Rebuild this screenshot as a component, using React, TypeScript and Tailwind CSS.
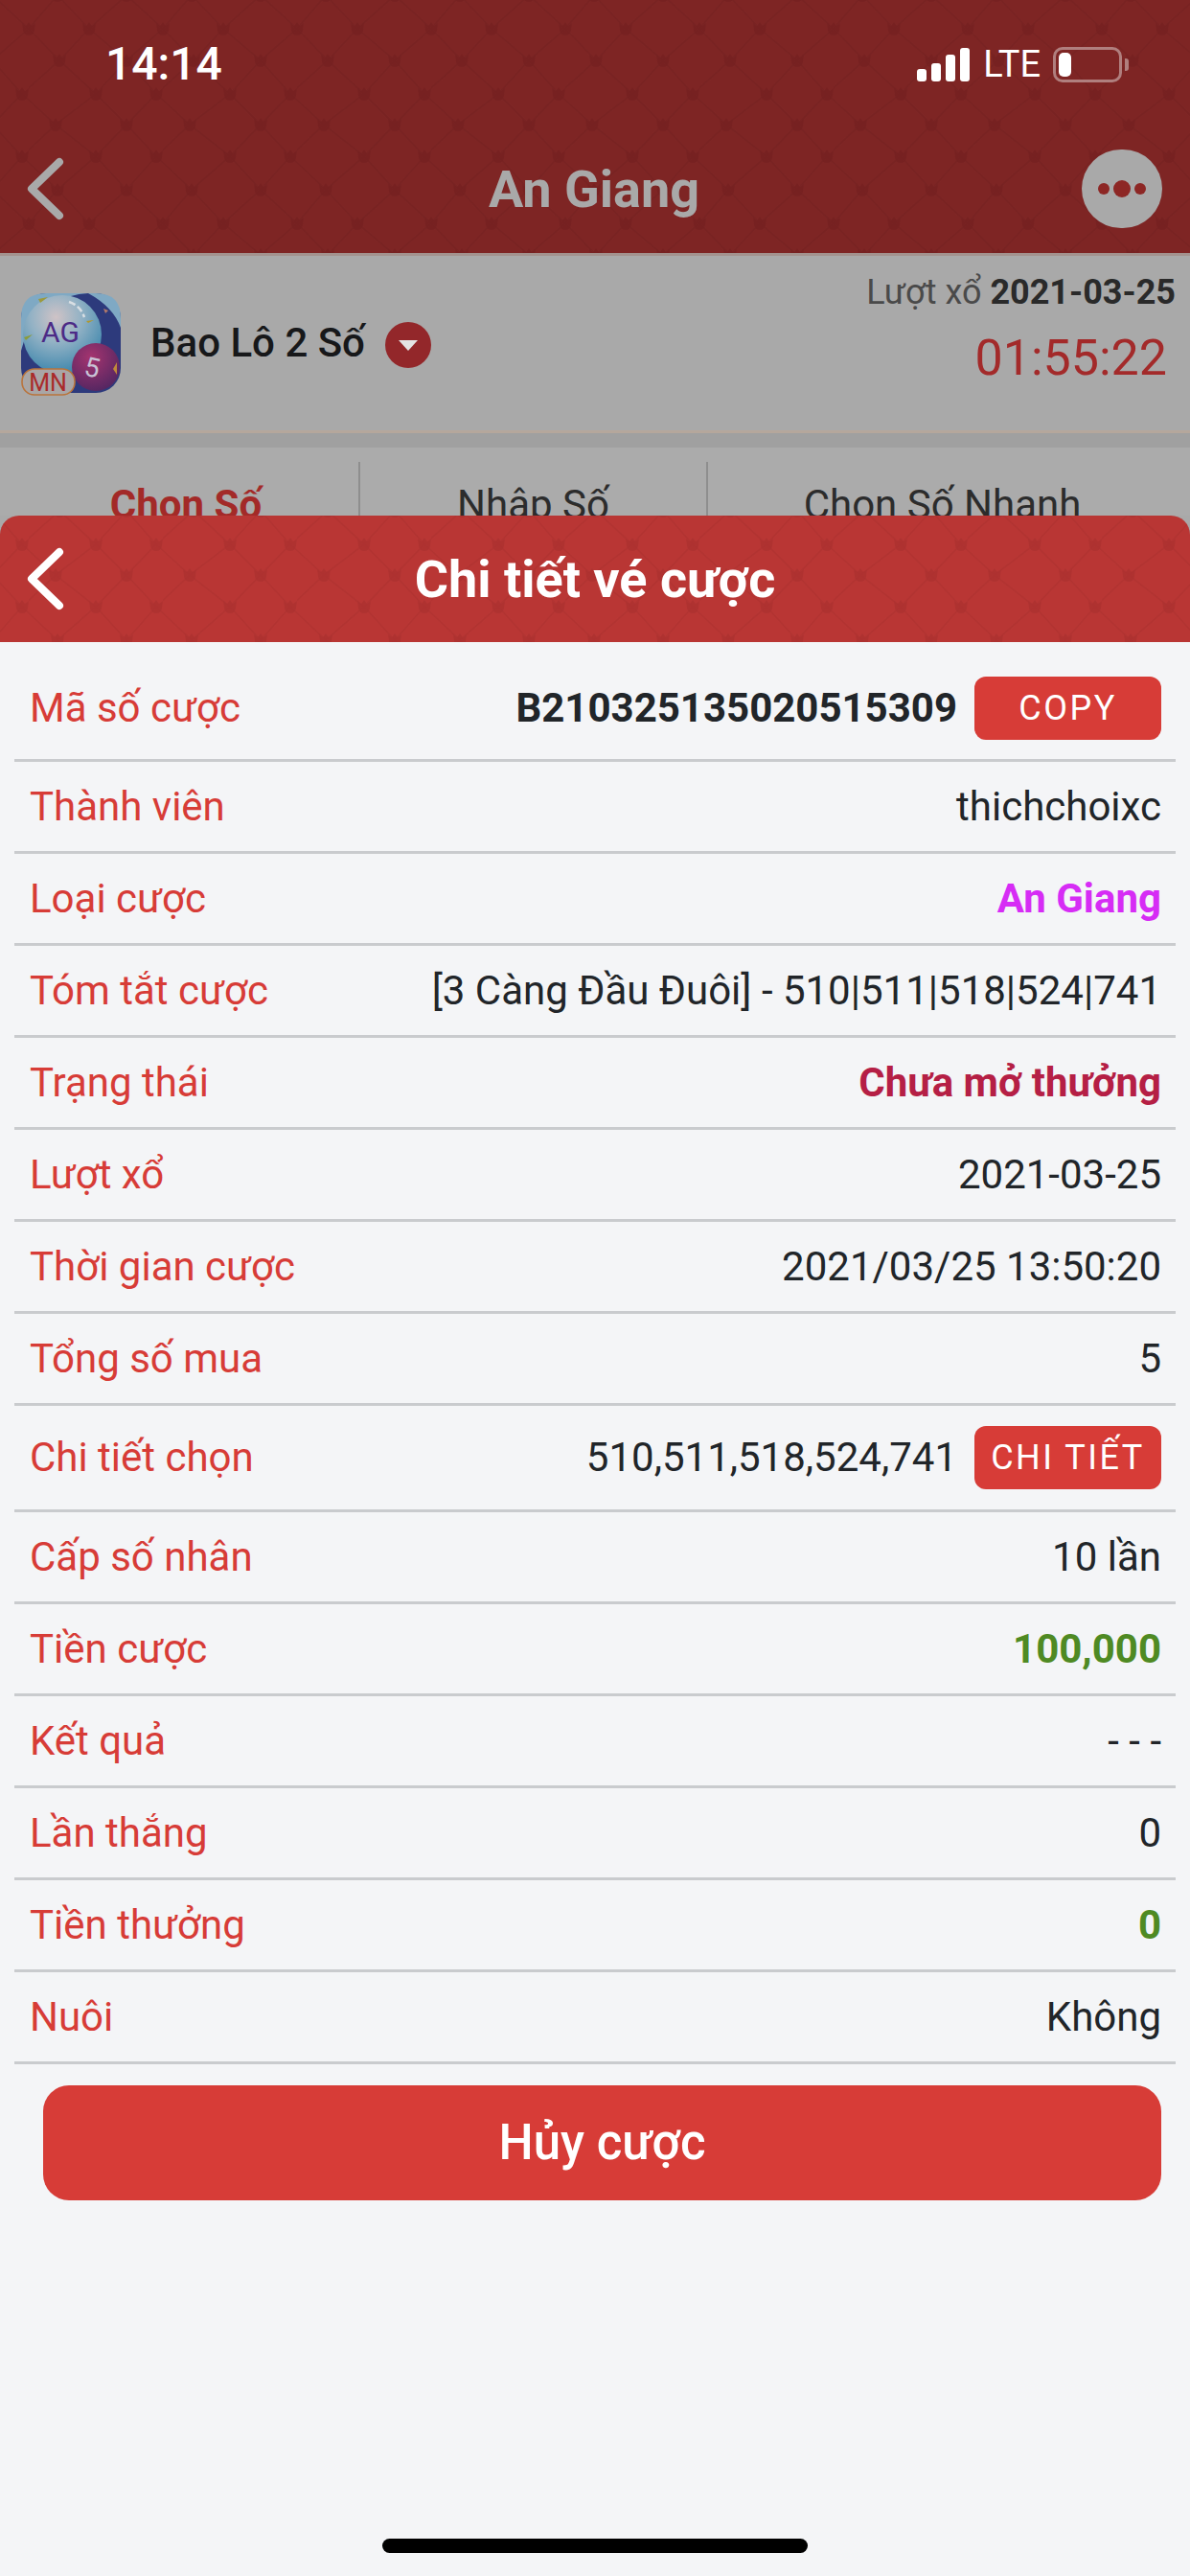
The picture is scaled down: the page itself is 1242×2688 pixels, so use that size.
import React from 'react';

const rows: { label: string; value: string; cls?: string; action?: string; h?: string }[] = [
  { label: 'Mã số cược', value: 'B210325135020515309', cls: 'font-bold text-[#212529]', action: 'COPY', h: 'h-[125px] pt-[36px] pb-[20px]' },
  { label: 'Thành viên', value: 'thichchoixc' },
  { label: 'Loại cược', value: 'An Giang', cls: 'font-bold text-[#d62cf5]' },
  { label: 'Tóm tắt cược', value: '[3 Càng Đầu Đuôi] - 510|511|518|524|741' },
  { label: 'Trạng thái', value: 'Chưa mở thưởng', cls: 'font-bold text-[#b51f45]' },
  { label: 'Lượt xổ', value: '2021-03-25' },
  { label: 'Thời gian cược', value: '2021/03/25 13:50:20' },
  { label: 'Tổng số mua', value: '5' },
  { label: 'Chi tiết chọn', value: '510,511,518,524,741', action: 'CHI TIẾT', h: 'h-[111px]' },
  { label: 'Cấp số nhân', value: '10 lần' },
  { label: 'Tiền cược', value: '100,000', cls: 'font-bold text-[#4f8a23]' },
  { label: 'Kết quả', value: '- - -' },
  { label: 'Lần thắng', value: '0' },
  { label: 'Tiền thưởng', value: '0', cls: 'font-bold text-[#4f8a23]' },
  { label: 'Nuôi', value: 'Không' },
];

const nodes = [
  [0, 0], [63, 0], [32, 33], [102, 33], [133, 68], [70, 68], [-7, 68],
  [28, 100], [102, 100], [168, 100], [133, 133], [70, 133], [-7, 133],
  [30, 168], [102, 168], [170, 168], [0, 203], [63, 203], [140, 203], [140, 0],
];

const lattice =
  'M0 0L32 33L70 68L102 100L133 133L170 168L203 203M63 0L32 33L-7 68M63 0L102 33L133 68L168 100M140 0L102 33L70 68L28 100L-7 133M-7 68L28 100L70 133L102 168L140 203M133 133L102 168L63 203M102 100L70 133L30 168L0 203M-7 133L30 168L63 203M133 68L102 100';

// diamond texture behind the two red bars
const Lattice = ({ id, y, color }: { id: string; y: number; color: string }) => (
  <svg className="absolute inset-0 w-full h-full" aria-hidden="true">
    <defs>
      <pattern id={id} x={30} y={y} width={140} height={203} patternUnits="userSpaceOnUse">
        <path d={lattice} fill="none" stroke={color} strokeWidth={1.8} opacity={0.55} />
        {nodes.map(([cx, cy], i) => (
          <path
            key={i}
            transform={`translate(${cx} ${cy})`}
            d="M-7 -6L-3 -3L0 -7L3 -3L7 -6L6 2Q5 7 0 7Q-5 7 -6 2Z"
            fill={color}
            opacity={0.8}
          />
        ))}
      </pattern>
    </defs>
    <rect width="100%" height="100%" fill={`url(#${id})`} />
  </svg>
);

const Chevron = ({ color, sw }: { color: string; sw: number }) => (
  <svg width="40" height="66" viewBox="0 0 40 66" fill="none">
    <path d="M35 5L6 33L35 61" stroke={color} strokeWidth={sw} strokeLinecap="round" strokeLinejoin="round" />
  </svg>
);

const GameIcon = () => (
  <svg width="106" height="108" viewBox="0 0 106 108" className="shrink-0">
    <defs>
      <radialGradient id="bubble" cx="0.42" cy="0.28" r="0.8">
        <stop offset="0" stopColor="#cfc3c6" />
        <stop offset="0.4" stopColor="#93b2c5" />
        <stop offset="1" stopColor="#2f7fa8" />
      </radialGradient>
      <radialGradient id="ball" cx="0.4" cy="0.3" r="0.8">
        <stop offset="0" stopColor="#a5346f" />
        <stop offset="1" stopColor="#4c2560" />
      </radialGradient>
    </defs>
    <rect x="0" y="0" width="104" height="104" rx="26" fill="#2d3a7c" />
    <path d="M0 26Q0 0 26 0H70Q30 2 6 40L0 60Z" fill="#7fa9c4" />
    <path d="M70 0H78Q104 0 104 26V36Q96 14 70 0Z" fill="#7fa9c4" />
    <circle cx="43" cy="43" r="41" fill="url(#bubble)" />
    <path d="M50 9Q62 13 66 25" fill="none" stroke="#d9dfe4" strokeWidth="2.5" strokeDasharray="7 3" />
    <path d="M18 6L28 4L20 10Z" fill="#9d9a3c" />
    <path d="M68 29L76 28L70 31Z" fill="#b0982e" />
    <path d="M3 46L12 43L5 49Z" fill="#8b9c3a" />
    <path d="M86 16L91 18L88 21Z" fill="#b27a6a" />
    <text x="41" y="51" textAnchor="middle" fontSize="30" fontFamily="Roboto, sans-serif" fill="#4c2a86">AG</text>
    <circle cx="78" cy="77" r="25" fill="url(#ball)" />
    <text x="74" y="87" textAnchor="middle" fontSize="28" fontFamily="Roboto, sans-serif" fill="#c9c3d6" transform="rotate(12 74 78)">5</text>
    <path d="M100 72L96 79L100 85Z" fill="#c08a3a" />
    <rect x="1" y="79" width="55" height="27" rx="13" fill="#a9a6a6" stroke="#b9743c" strokeWidth="1.6" />
    <text x="28" y="102" textAnchor="middle" fontSize="25" fontFamily="Roboto, sans-serif" fill="#a92a2a">MN</text>
  </svg>
);

const Tab = ({ label, width, active }: { label: string; width: string; active?: boolean }) => (
  <div className={`${width} relative flex justify-center pt-[36px]`}>
    <span className={`text-[42px] leading-[48px] ${active ? 'font-bold text-[#a32a28]' : 'text-[#2c2c2c]'}`}>{label}</span>
  </div>
);

const Row = ({ row }: { row: (typeof rows)[number] }) => (
  <div className={`flex items-center justify-between border-b-[3px] border-[#c9cbce] pl-[16px] pr-[15px] ${row.h ?? 'h-[96px]'}`}>
    <span className="text-[42px] leading-[48px] text-[#d73c37]">{row.label}</span>
    <div className="flex items-center gap-[18px]">
      <span className={`text-[42px] leading-[48px] ${row.cls ?? 'text-[#212529]'}`}>{row.value}</span>
      {row.action && (
        <div className="w-[195px] h-[66px] rounded-[12px] bg-[#d73c37] flex items-center justify-center text-white text-[36px] tracking-[2.5px]">
          {row.action}
        </div>
      )}
    </div>
  </div>
);

export default function App() {
  return (
    <div className="w-[1242px] h-[2688px] overflow-hidden flex flex-col bg-[#f4f5f7] font-['Roboto',sans-serif]">
      <div className="bg-[#a9a9a9] flex flex-col">
        <header className="relative h-[264px] bg-[#7e2524]">
          <Lattice id="topLattice" y={30} color="#752120" />
          <div className="relative h-[134px] flex items-center justify-between pl-[110px] pr-[64px]">
            <span className="text-white text-[48px] font-medium">14:14</span>
            <div className="flex items-center">
              <div className="flex items-end gap-[5px] h-[35px]">
                <div className="w-[10px] h-[13px] bg-white rounded-[3px]" />
                <div className="w-[10px] h-[19px] bg-white rounded-[3px]" />
                <div className="w-[10px] h-[28px] bg-white rounded-[3px]" />
                <div className="w-[10px] h-[35px] bg-white rounded-[3px]" />
              </div>
              <span className="ml-[14px] text-white text-[38px] leading-[35px]">LTE</span>
              <div className="ml-[13px] w-[72px] h-[37px] rounded-[10px] border-[3px] border-[#b07f7e] p-[3px]">
                <div className="w-[13px] h-full bg-white rounded-[5px]" />
              </div>
              <div className="ml-[3px] w-[4px] h-[13px] rounded-r-[3px] bg-[#b07f7e]" />
            </div>
          </div>
          <div className="relative mt-[21px] h-[84px] grid grid-cols-[1fr_auto_1fr] items-center pl-[27px] pr-[29px]">
            <Chevron color="#a9a9a9" sw={8} />
            <span className="text-[54px] font-bold text-[#a9a9a9]">An Giang</span>
            <div className="justify-self-end w-[84px] h-[82px] rounded-full bg-[#a9a9a9] flex items-center justify-center gap-[4px]">
              <div className="w-[12px] h-[12px] rounded-full bg-[#8d2725]" />
              <div className="w-[18px] h-[18px] rounded-full bg-[#8d2725]" />
              <div className="w-[12px] h-[12px] rounded-full bg-[#8d2725]" />
            </div>
          </div>
        </header>

        <section className="h-[188px] border-t-[3px] border-b-[3px] border-t-[#a3928e] border-b-[#b5a79c] flex justify-between pl-[22px] pr-[15px]">
          <div className="flex items-start pt-[39px]">
            <GameIcon />
            <span className="ml-[29px] mt-[26px] text-[42px] font-medium leading-[52px] text-[#17181a]">Bao Lô 2 Số</span>
            <div className="ml-[21px] mt-[30px] w-[48px] h-[48px] rounded-full bg-[#93272a] flex items-center justify-center">
              <div className="w-0 h-0 border-l-[10px] border-r-[10px] border-t-[11px] border-l-transparent border-r-transparent border-t-[#e4e4e4]" />
            </div>
          </div>
          <div className="flex flex-col items-end pt-[16px]">
            <div className="text-[36px] leading-[44px] text-[#4a4a4a]">
              Lượt xổ <span className="font-bold text-[#2a2a2a]">2021-03-25</span>
            </div>
            <span className="mt-[17px] mr-[9px] text-[52px] leading-[60px] text-[#a32a2a]">01:55:22</span>
          </div>
        </section>

        <div className="h-[15px] bg-[#a0a0a0]" />

        <div className="h-[71px] overflow-hidden bg-[#ababab] flex">
          <Tab label="Chọn Số" width="w-[374px] pl-[14px]" active />
          <div className="w-[2px] h-[56px] mt-[15px] bg-[#8e8e8e]" />
          <Tab label="Nhập Số" width="w-[361px]" />
          <div className="w-[2px] h-[56px] mt-[15px] bg-[#8e8e8e]" />
          <Tab label="Chọn Số Nhanh" width="flex-1 pr-[14px]" />
        </div>
      </div>

      <div className="bg-[#a9a9a9]">
        <div className="relative h-[132px] rounded-t-[20px] overflow-hidden bg-[#b93634] grid grid-cols-[1fr_auto_1fr] items-center px-[27px]">
          <Lattice id="sheetLattice" y={-38} color="#ad3130" />
          <div className="relative flex">
            <Chevron color="#ffffff" sw={8} />
          </div>
          <span className="relative text-[54px] font-bold text-white">Chi tiết vé cược</span>
        </div>
      </div>

      <div className="px-[15px]">
        {rows.map((row) => (
          <Row key={row.label} row={row} />
        ))}
      </div>
      <button className="mt-[22px] ml-[45px] w-[1167px] h-[120px] rounded-[27px] bg-[#d73c37] text-white text-[51px] font-medium">
        Hủy cược
      </button>

      <div className="mt-[353px] mx-auto w-[444px] h-[15px] rounded-full bg-black" />
    </div>
  );
}
